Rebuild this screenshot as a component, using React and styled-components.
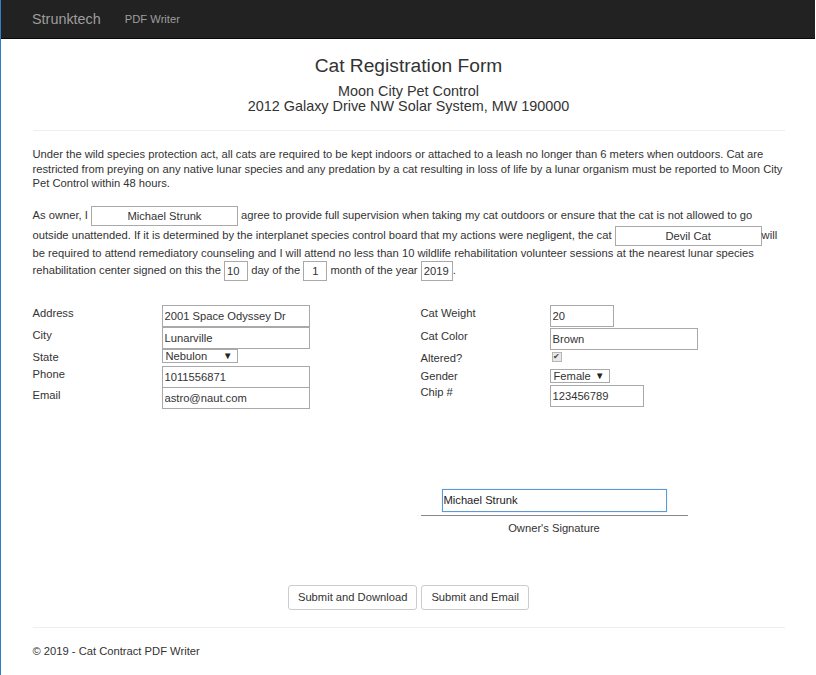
import styled, { createGlobalStyle } from "styled-components";

const GlobalStyle = createGlobalStyle`
  html, body {
    margin: 0;
    padding: 0;
    background: #fff;
  }
  body {
    font-family: "Liberation Sans", Arial, Helvetica, sans-serif;
    font-size: 11.2px;
    line-height: 16px;
    color: #333;
    border-left: 1px solid #2f7fc8;
    min-height: 675px;
    box-sizing: border-box;
  }
  * {
    box-sizing: border-box;
  }
`;

const Navbar = styled.nav`
  height: 39px;
  background: #222;
  border-bottom: 1px solid #080808;
  margin-right: 1px;
`;

const NavInner = styled.div`
  width: 776px;
  margin: 0 auto;
  padding: 0 12px;
  height: 100%;
  display: flex;
  align-items: center;
`;

const Brand = styled.a`
  color: #9d9d9d;
  font-size: 14.4px;
  text-decoration: none;
  margin-right: 24px;
`;

const NavLink = styled.a`
  color: #9d9d9d;
  font-size: 11.2px;
  text-decoration: none;
`;

const Container = styled.main`
  width: 776px;
  margin: 0 auto;
  padding: 0 12px;
`;

const Header = styled.header`
  text-align: center;
  padding-top: 15px;
`;

const Title = styled.h2`
  margin: 0 0 6px;
  font-size: 19.2px;
  font-weight: 400;
  line-height: 24px;
`;

const SubTitle = styled.h4`
  margin: 0;
  font-size: 14.4px;
  font-weight: 400;
  line-height: 15px;
`;

const Rule = styled.hr`
  border: 0;
  border-top: 1px solid #eee;
  margin: ${(p) => p.$margin || "16px 0"};
`;

const Paragraph = styled.p`
  margin: 0 0 ${(p) => p.$gap || "16px"};
  line-height: ${(p) => p.$lh || "16px"};
`;

const InlineInput = styled.input`
  display: inline-block;
  vertical-align: middle;
  height: 20px;
  width: ${(p) => p.$w}px;
  margin: 0;
  padding: 1px 2px;
  border: 1px solid #a9a9a9;
  font: inherit;
  line-height: 16px;
  color: #333;
  text-align: ${(p) => p.$align || "center"};
  background: #fff;
`;

const FormGrid = styled.div`
  display: grid;
  grid-template-columns: 1fr 1fr;
  column-gap: 24px;
  margin-top: 24px;
`;

const FieldList = styled.div`
  display: grid;
  grid-template-columns: 129px 1fr;
  align-items: start;
`;

const Label = styled.label`
  line-height: 14px;
  padding-top: ${(p) => p.$pt ?? 1}px;
  height: ${(p) => p.$h}px;
`;

const Cell = styled.div`
  height: ${(p) => p.$h}px;
  padding-top: ${(p) => p.$pt || 0}px;
`;

const TextInput = styled.input`
  width: ${(p) => p.$w}px;
  height: 22px;
  padding: 1px 2px;
  border: 1px solid #a9a9a9;
  font: inherit;
  color: #333;
  background: #fff;
  &:focus {
    outline: none;
  }
`;

const SelectBox = styled.div`
  position: relative;
  display: flex;
  width: ${(p) => p.$w}px;
  height: 14px;
  border: 1px solid #a9a9a9;
  background: #fff;
`;

const Select = styled.select`
  appearance: none;
  -webkit-appearance: none;
  border: 0;
  background: transparent;
  font: inherit;
  color: #333;
  line-height: 12px;
  height: 12px;
  width: 100%;
  padding: 0 0 0 3px;
  outline: none;
`;

const Arrow = styled.span`
  position: absolute;
  right: 4px;
  top: 0;
  font-size: 9.5px;
  line-height: 12px;
  color: #222;
  pointer-events: none;
`;

const Check = styled.span`
  display: flex;
  align-items: center;
  justify-content: center;
  width: 10px;
  height: 10px;
  margin: 1px 0 0 2px;
  border: 1px solid #b5b5b5;
  background: #e8e8e8;
  color: #444;
  font-size: 8px;
  line-height: 8px;
`;

const SignatureArea = styled.div`
  display: grid;
  grid-template-columns: 1fr 1fr;
  column-gap: 24px;
  margin-top: 80px;
`;

const SignatureBlock = styled.div`
  grid-column: 2;
  width: 267px;
  display: flex;
  flex-direction: column;
  align-items: center;
`;

const SignatureInput = styled.input`
  width: 225px;
  height: 23px;
  padding: 1px 1px;
  border: 1px solid #5b9bd5;
  font: inherit;
  color: #222;
  outline: none;
  box-shadow: 0 0 1px rgba(91, 155, 213, 0.5);
`;

const SignatureLine = styled.div`
  width: 100%;
  border-top: 1px solid #888;
  margin-top: 3px;
  padding-top: 4px;
  text-align: center;
`;

const ButtonRow = styled.div`
  display: flex;
  justify-content: center;
  gap: 4px;
  margin-top: 49px;
`;

const Button = styled.button`
  font: inherit;
  color: #333;
  background: #fff;
  border: 1px solid #ccc;
  border-radius: 3px;
  height: 25px;
  padding: 0 9px;
`;

const Footer = styled.footer`
  padding-top: 0;
`;

const fieldsLeft = [
  { label: "Address", value: "2001 Space Odyssey Dr", w: 148, h: 22 },
  { label: "City", value: "Lunarville", w: 148, h: 22 },
  { label: "State", select: "Nebulon", w: 76, h: 17 },
  { label: "Phone", value: "1011556871", w: 148, h: 21 },
  { label: "Email", value: "astro@naut.com", w: 148, h: 22 },
];

const fieldsRight = [
  { label: "Cat Weight", value: "20", w: 64, h: 22 },
  { label: "Cat Color", value: "Brown", w: 148, h: 22 },
  { label: "Altered?", check: true, h: 14, pt: 0 },
  { label: "Gender", select: "Female", w: 60, h: 18, pt: 3, cellPt: 3 },
  { label: "Chip #", value: "123456789", w: 94, h: 22, pt: 0 },
];

const Field = ({ f }) => (
  <>
    <Label $h={f.h} $pt={f.pt}>{f.label}</Label>
    <Cell $h={f.h} $pt={f.cellPt}>
      {f.select ? (
        <SelectBox $w={f.w}>
          <Select defaultValue={f.select}>
            <option>{f.select}</option>
          </Select>
          <Arrow>▼</Arrow>
        </SelectBox>
      ) : f.check ? (
        <Check>✔</Check>
      ) : (
        <TextInput $w={f.w} defaultValue={f.value} />
      )}
    </Cell>
  </>
);

const App = () => {
  return (
    <>
      <GlobalStyle />
      <Navbar>
        <NavInner>
          <Brand href="#">Strunktech</Brand>
          <NavLink href="#">PDF Writer</NavLink>
        </NavInner>
      </Navbar>
      <Container>
        <Header>
          <Title>Cat Registration Form</Title>
          <SubTitle>Moon City Pet Control</SubTitle>
          <SubTitle>2012 Galaxy Drive NW Solar System, MW 190000</SubTitle>
        </Header>
        <Rule $margin="16px 0 16px" />
        <Paragraph $lh="14.5px" $gap="15px">
          Under the wild species protection act, all cats are required to be
          kept indoors or attached to a leash no longer than 6 meters when
          outdoors. Cat are restricted from preying on any native lunar species
          and any predation by a cat resulting in loss of life by a lunar
          organism must be reported to Moon City Pet Control within 48 hours.
        </Paragraph>
        <Paragraph $lh="15px">
          As owner, I <InlineInput $w={147} defaultValue="Michael Strunk" />{" "}
          agree to provide full supervision when taking my cat outdoors or
          ensure that the cat is not allowed to go outside unattended. If it is
          determined by the interplanet species control board that my actions
          were negligent, the cat{" "}
          <InlineInput $w={147} defaultValue="Devil Cat" />will be required to
          attend remediatory counseling and I will attend no less than 10
          wildlife rehabilitation volunteer sessions at the nearest lunar
          species rehabilitation center signed on this the{" "}
          <InlineInput $w={24} $align="left" defaultValue="10" /> day of the{" "}
          <InlineInput $w={24} defaultValue="1" /> month of the year{" "}
          <InlineInput $w={32} $align="left" defaultValue="2019" />.
        </Paragraph>
        <FormGrid>
          <FieldList>
            {fieldsLeft.map((f) => (
              <Field key={f.label} f={f} />
            ))}
          </FieldList>
          <FieldList>
            {fieldsRight.map((f) => (
              <Field key={f.label} f={f} />
            ))}
          </FieldList>
        </FormGrid>
        <SignatureArea>
          <SignatureBlock>
            <SignatureInput defaultValue="Michael Strunk" />
            <SignatureLine>Owner's Signature</SignatureLine>
          </SignatureBlock>
        </SignatureArea>
        <ButtonRow>
          <Button>Submit and Download</Button>
          <Button>Submit and Email</Button>
        </ButtonRow>
        <Rule $margin="17px 0 15px" />
        <Footer>© 2019 - Cat Contract PDF Writer</Footer>
      </Container>
    </>
  );
};

export default App;
